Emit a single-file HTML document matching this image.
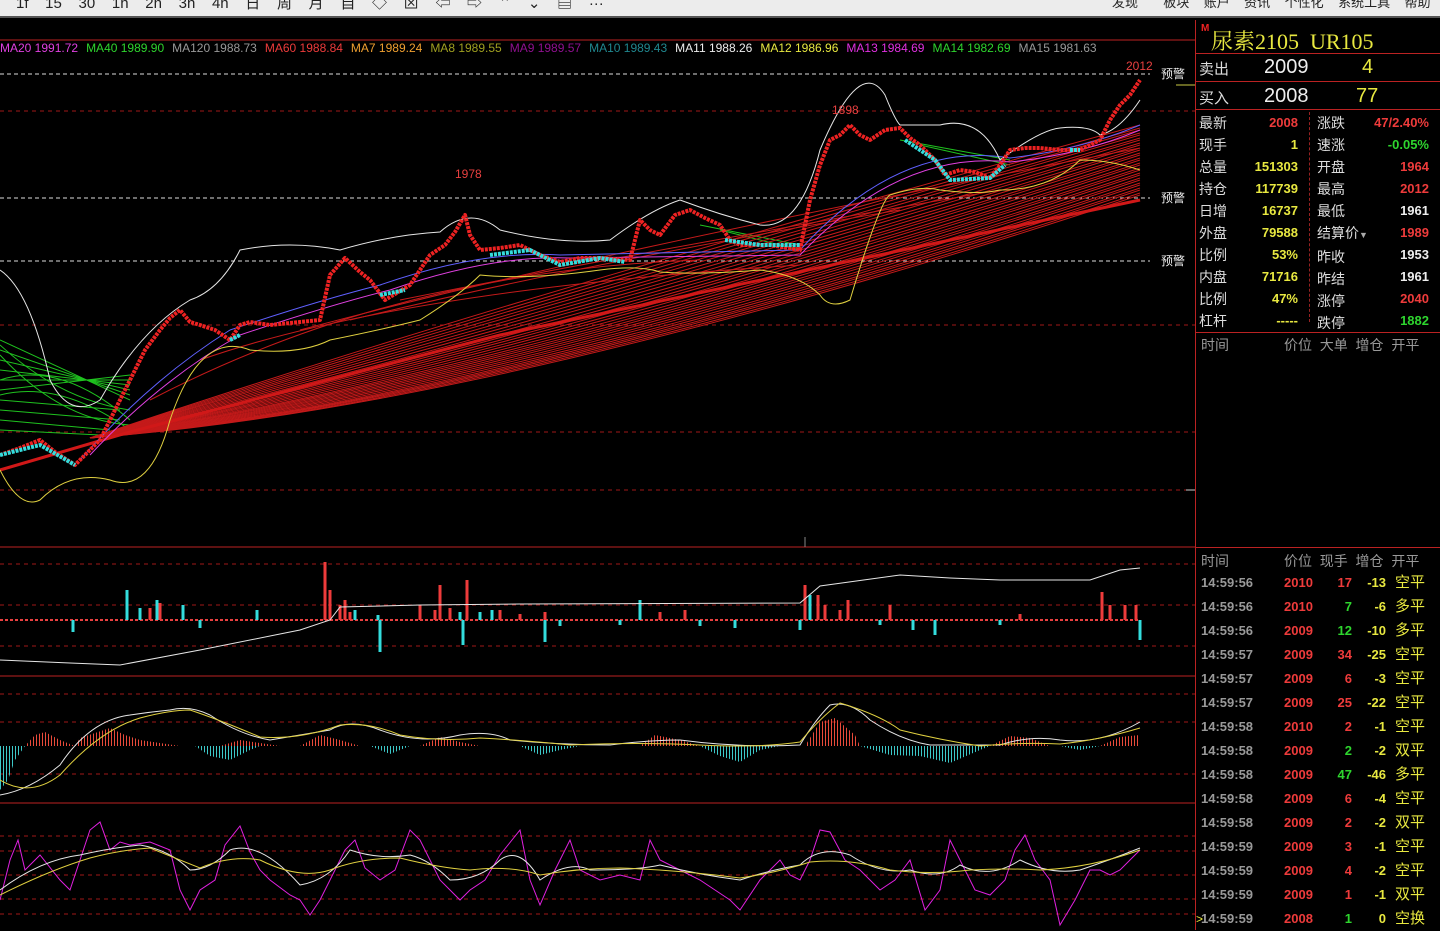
<!DOCTYPE html>
<html><head><meta charset="utf-8"><style>
*{margin:0;padding:0;box-sizing:border-box}
body{width:1440px;height:930px;background:#000;overflow:hidden;font-family:"Liberation Sans","Noto Sans CJK SC",sans-serif;position:relative}
.menu{position:absolute;left:0;top:0;width:1440px;height:18px;background:#ececec;border-bottom:2px solid #555;overflow:hidden}
.menu span{position:absolute;top:-8px;font-size:15px;color:#222}
.abs{position:absolute;white-space:nowrap}
.rp{position:absolute;left:1195px;top:20px;width:245px;height:910px;border-left:1px solid #b22;}
.lbl{color:#ddd;font-size:15px}
.y{color:#e8e840}.r{color:#ee3b3b}.g{color:#2ed52e}.w{color:#eee}.gr{color:#999}
.b{font-weight:bold;font-size:13px}
.leg span{margin-right:8px}
</style></head><body>
<div class="menu">
<span style="left:16px">1f &nbsp;&nbsp; 15 &nbsp;&nbsp; 30 &nbsp;&nbsp; 1h &nbsp;&nbsp; 2h &nbsp;&nbsp; 3h &nbsp;&nbsp; 4h &nbsp;&nbsp; 日 &nbsp;&nbsp; 周 &nbsp;&nbsp; 月 &nbsp;&nbsp; 自 &nbsp;&nbsp; ◇ &nbsp;&nbsp; ⊠ &nbsp;&nbsp; ⇦ &nbsp;&nbsp; ⇨ &nbsp;&nbsp; ⌃ &nbsp;&nbsp; ⌄ &nbsp;&nbsp; ▤ &nbsp;&nbsp; ···</span>
<span style="left:1112px;font-size:13px">发现 &nbsp;&nbsp;&nbsp;&nbsp;&nbsp; 板块 &nbsp;&nbsp; 账户 &nbsp;&nbsp; 资讯 &nbsp;&nbsp; 个性化 &nbsp;&nbsp; 系统工具 &nbsp;&nbsp; 帮助</span>
</div>

<svg class="abs" style="left:0;top:20px" width="1195" height="910" viewBox="0 20 1195 910">
<defs>
<pattern id="pr" width="3" height="10" patternUnits="userSpaceOnUse"><rect width="1" height="10" fill="#e84a3a"/></pattern>
<pattern id="pc" width="3" height="10" patternUnits="userSpaceOnUse"><rect width="1" height="10" fill="#3cc8c8"/></pattern>
</defs>
<g stroke="#a01818" stroke-width="1" fill="none">
<line x1="0" y1="40" x2="1195" y2="40" stroke="#b22"/>
<line x1="0" y1="547" x2="1195" y2="547" stroke="#b22"/>
<line x1="0" y1="676" x2="1195" y2="676" stroke="#b22"/>
<line x1="0" y1="803" x2="1195" y2="803" stroke="#b22"/>
<g stroke-dasharray="4 4">
<line x1="0" y1="111" x2="1195" y2="111"/><line x1="0" y1="325" x2="1195" y2="325"/><line x1="0" y1="432" x2="1195" y2="432"/><line x1="0" y1="490" x2="1195" y2="490"/>
<line x1="0" y1="564" x2="1195" y2="564"/><line x1="0" y1="605" x2="1195" y2="605"/><line x1="0" y1="646" x2="1195" y2="646"/>
<line x1="0" y1="694" x2="1195" y2="694"/><line x1="0" y1="722" x2="1195" y2="722"/><line x1="0" y1="774" x2="1195" y2="774"/>
<line x1="0" y1="836" x2="1195" y2="836"/><line x1="0" y1="851" x2="1195" y2="851"/><line x1="0" y1="875" x2="1195" y2="875"/><line x1="0" y1="899" x2="1195" y2="899"/><line x1="0" y1="914" x2="1195" y2="914"/>
</g>
</g>
<g stroke="#ddd" stroke-dasharray="4 3" stroke-width="1">
<line x1="0" y1="74" x2="1150" y2="74"/><line x1="0" y1="198" x2="1150" y2="198"/><line x1="0" y1="261" x2="1150" y2="261"/>
</g>
<line x1="1176" y1="85" x2="1195" y2="85" stroke="#cc4"/>
<line x1="1186" y1="490" x2="1195" y2="490" stroke="#ccc"/>
<line x1="805" y1="537" x2="805" y2="547" stroke="#888"/>
<!-- green fan left -->
<g stroke="#1fc21f" fill="none" stroke-width="1">
<path d="M0 340 L130 400"/><path d="M0 350 L130 395"/><path d="M0 360 L130 390"/><path d="M0 370 L130 385"/><path d="M0 380 L130 380"/>
<path d="M0 390 L130 375"/><path d="M0 400 L120 410"/><path d="M0 410 L120 420"/><path d="M0 420 L110 430"/><path d="M0 430 L100 435"/>
<path d="M0 380 Q60 360 130 420"/><path d="M0 395 Q60 380 130 430"/><path d="M0 345 Q60 400 130 410"/><path d="M0 355 Q60 420 130 425"/>
<path d="M700 225 L800 245"/><path d="M720 230 L800 250"/><path d="M900 140 L1010 160"/><path d="M920 145 L1010 165"/>
</g>
<!-- red fan -->
<g stroke="#c41a1a" fill="none" stroke-width="1">
<path d="M90 438 Q500 300 1140 125"/><path d="M90 438 Q500 305 1140 128"/><path d="M90 438 Q500 310 1140 130"/><path d="M90 438 Q500 315 1140 133"/><path d="M90 438 Q500 320 1140 135"/><path d="M90 438 Q500 325 1140 138"/><path d="M90 438 Q500 330 1140 140"/>
<path d="M90 438 Q500 335 1140 143"/><path d="M90 438 Q500 340 1140 145"/><path d="M90 438 Q500 345 1140 148"/><path d="M90 438 Q500 350 1140 150"/><path d="M90 438 Q500 354 1140 153"/><path d="M90 438 Q500 358 1140 155"/><path d="M90 438 Q500 362 1140 158"/><path d="M90 438 Q500 366 1140 160"/>
<path d="M90 438 Q500 370 1140 163"/><path d="M90 438 Q500 374 1140 165"/><path d="M90 438 Q500 377 1140 168"/><path d="M90 438 Q500 380 1140 170"/><path d="M90 438 Q500 383 1140 173"/><path d="M90 438 Q500 386 1140 175"/><path d="M90 438 Q500 389 1140 178"/><path d="M90 438 Q500 392 1140 180"/>
<path d="M90 438 Q500 395 1140 183"/><path d="M90 438 Q500 398 1140 185"/><path d="M90 438 Q500 400 1140 188"/><path d="M90 438 Q500 402 1140 190"/><path d="M90 438 Q500 404 1140 193"/><path d="M90 438 Q500 406 1140 195"/>
<path d="M150 400 Q400 270 700 260"/><path d="M200 360 Q400 290 800 265"/><path d="M300 330 Q600 250 1140 148"/><path d="M350 320 Q600 260 900 210"/><path d="M400 300 Q650 250 1000 190"/>
</g>
<path d="M0 470 L130 432 L500 335 L1140 200" stroke="#d01818" stroke-width="3" fill="none"/>
<!-- MA thin lines -->
<path d="M80 460 Q150 380 230 330 Q320 300 380 285 Q480 250 560 255 L800 250 Q900 140 1010 158 Q1080 150 1140 125" stroke="#6060ff" fill="none"/>
<path d="M90 455 Q160 380 240 335 Q330 305 390 290 Q490 255 570 258 L800 255 Q900 150 1010 162 Q1080 155 1140 130" stroke="#e040e0" fill="none"/>
<!-- bollinger -->
<path d="M0 270 Q30 290 50 380 Q70 420 100 400 Q140 330 190 300 Q220 290 240 250 Q290 240 340 250 Q390 235 440 232 Q470 205 500 230 Q560 245 610 240 Q650 210 680 200 Q720 215 760 225 Q800 230 820 150 Q860 55 885 95 Q895 120 900 125 L940 125 Q980 115 1000 160 Q1040 130 1060 128 Q1090 125 1100 135 Q1120 130 1140 100" stroke="#e6e6e6" fill="none"/>
<path d="M0 470 Q20 510 40 500 Q70 470 110 480 Q150 495 170 420 Q200 330 250 350 Q300 355 330 340 Q380 330 420 320 Q460 295 480 275 Q530 280 600 270 Q640 265 660 272 Q700 275 760 270 Q800 275 820 295 Q830 310 850 300 Q880 200 890 195 Q920 185 940 190 Q980 195 1000 190 Q1050 190 1080 160 Q1110 160 1140 170" stroke="#e0d040" fill="none"/>
<!-- price candles approx -->
<polyline points="0,455 20,448 40,440 55,452 75,465 90,450 100,440 115,410 130,380 145,350 160,330 170,318 180,310 190,322 200,325 215,330 230,340 240,325 250,322 270,325 300,322 320,320 330,275 345,258 360,272 370,280 385,300 410,285 420,270 430,255 445,245 455,232 465,215 470,235 480,250 500,248 520,245 540,255 560,262 580,258 600,258 630,260 640,220 650,230 660,235 675,215 690,210 705,218 720,225 730,240 740,245 770,245 800,250 810,200 820,165 830,140 840,135 850,125 860,135 870,140 885,130 900,128 910,138 920,145 935,160 945,175 960,170 975,172 990,178 1000,165 1010,150 1025,148 1040,148 1060,150 1080,150 1100,140 1110,120 1120,105 1130,95 1140,80" stroke="#ee2222" stroke-width="4" fill="none" stroke-linejoin="round" stroke-dasharray="3 1"/>
<g stroke="#33dddd" stroke-width="4" fill="none" stroke-dasharray="3 1">
<polyline points="0,455 40,445 75,465"/><polyline points="230,340 240,335"/><polyline points="380,295 405,290"/><polyline points="490,255 530,250 560,265 600,258 625,262"/><polyline points="725,240 760,245 800,245"/><polyline points="905,140 935,160 950,180 990,178 1005,165"/><polyline points="1070,150 1080,150"/>
</g>
<g fill="#e84040" font-size="12"><text x="455" y="178">1978</text><text x="832" y="114">1898</text><text x="1126" y="70">2012</text></g>
<g fill="#eee" font-size="12" font-family="Noto Sans CJK SC,sans-serif"><text x="1161" y="78">预警</text><text x="1161" y="202">预警</text><text x="1161" y="265">预警</text></g>
<!-- volume -->
<line x1="0" y1="620" x2="1140" y2="620" stroke="#e84040" stroke-width="2" stroke-dasharray="3 2"/>
<g stroke-width="3">
<path d="M127 620V590M140 620V608M157 620V600M183 620V605M257 620V610M330 620V606M378 620V615M460 620V612M492 620V610M640 620V600M810 620V595M1140 620V640M73 620V632M380 620V652M463 620V645M545 620V642M735 620V628M913 620V630M935 620V635M800 620V630M200 620V628M355 620V610M480 620V612M560 620V626M620 620V625M700 620V626M880 620V625M1000 620V625" stroke="#33dddd"/>
<path d="M325 620V562M330 620V590M345 620V600M440 620V585M467 620V580M500 620V610M545 620V612M685 620V610M805 620V585M818 620V595M848 620V600M1102 620V592M1110 620V605M1125 620V605M1136 620V605M420 620V605M890 620V605M160 620V603M150 620V608M340 620V605M350 620V612M435 620V610M450 620V608M520 620V614M660 620V612M825 620V605M840 620V610M1020 620V614" stroke="#ee3b3b"/>
</g>
<path d="M0 660 L70 663 L120 665 L200 650 L300 630 L330 620 L340 607 L420 605 L520 604 L800 603 L820 586 L900 575 L950 578 L1000 580 L1090 580 L1120 570 L1140 568" stroke="#e6e6e6" fill="none"/>
<!-- MACD -->
<path d="M25 746 L35 735 L45 732 L60 740 L75 746 L80 738 L110 728 L125 735 L140 740 L180 746 Z M300 746 L320 735 L340 740 L360 746 Z M420 746 L440 737 L460 742 L480 746 Z M640 746 L655 735 L680 740 L700 746 Z M805 746 L820 722 L835 718 L855 735 L860 746 Z M990 746 L1010 736 L1030 738 L1050 746 Z M1100 746 L1120 737 L1140 735 L1140 746 Z M220 746 L240 740 L260 743 L280 746Z" fill="url(#pr)"/>
<path d="M0 746 L0 790 L8 780 L15 760 L25 746 Z M195 746 L210 756 L230 760 L250 750 L260 746 Z M370 746 L390 754 L410 746 Z M520 746 L540 755 L560 750 L580 746 Z M700 746 L720 756 L740 762 L760 750 L780 746 Z M860 746 L890 755 L920 756 L950 763 L980 750 L990 746 Z M1060 746 L1080 750 L1100 746Z" fill="url(#pc)"/>
<path d="M0 795 Q30 790 60 765 Q90 720 130 715 Q150 712 170 710 Q190 705 210 715 Q240 735 270 740 Q300 735 330 730 Q350 718 380 730 Q420 745 460 735 Q490 730 510 740 Q560 745 610 745 Q650 740 680 740 Q740 748 800 745 Q815 720 830 705 Q850 700 870 720 Q900 740 930 745 Q970 745 1000 745 Q1030 735 1060 740 Q1100 745 1140 722" stroke="#e6e6e6" fill="none"/>
<path d="M0 780 Q30 798 60 775 Q100 730 140 718 Q170 710 190 710 Q220 720 260 737 Q300 740 340 725 Q370 722 400 735 Q440 742 480 738 Q520 740 570 745 Q640 742 700 745 Q760 748 800 742 Q820 718 840 703 Q880 715 900 730 Q940 740 980 746 Q1020 742 1060 744 Q1100 740 1140 728" stroke="#e0d040" fill="none"/>
<!-- KDJ -->
<path d="M0 900 L10 860 L18 840 L25 870 L40 855 L60 880 L70 890 L80 860 L90 830 L100 822 L110 850 L120 842 L130 845 L150 842 L170 850 L180 890 L190 910 L200 890 L215 880 L225 845 L240 826 L250 852 L260 870 L270 880 L290 895 L300 900 L310 915 L320 900 L330 880 L345 850 L355 840 L365 868 L380 880 L395 870 L410 830 L420 840 L430 860 L440 880 L450 890 L460 900 L470 890 L485 880 L500 855 L520 830 L530 880 L540 905 L555 870 L570 840 L580 870 L600 880 L620 875 L640 880 L650 840 L660 860 L680 870 L700 880 L715 890 L730 900 L740 910 L760 880 L770 870 L780 860 L790 875 L800 880 L810 860 L820 830 L830 832 L845 860 L860 870 L880 890 L895 880 L910 860 L925 910 L940 890 L950 840 L960 860 L975 890 L990 895 L1005 880 L1015 850 L1025 835 L1035 860 L1050 880 L1060 925 L1075 900 L1090 870 L1100 870 L1110 875 L1120 870 L1140 850" stroke="#e020e0" fill="none"/>
<path d="M0 890 Q40 860 80 855 Q110 848 140 845 Q170 850 190 870 Q210 870 230 850 Q260 840 300 885 Q330 880 350 850 Q380 860 410 855 Q430 860 450 880 Q480 880 500 860 Q520 845 540 880 Q570 860 590 870 Q640 870 660 865 Q700 875 740 880 Q770 870 800 865 Q820 845 850 855 Q880 875 910 870 Q940 880 960 865 Q990 880 1020 860 Q1050 875 1080 870 Q1110 860 1140 848" stroke="#e6e6e6" fill="none"/>
<path d="M0 895 Q50 870 90 858 Q120 850 150 848 Q180 860 200 868 Q230 855 260 860 Q300 880 330 870 Q360 858 400 858 Q440 868 470 870 Q510 865 540 875 Q580 868 620 868 Q680 870 740 878 Q780 872 810 862 Q850 858 890 870 Q930 875 970 870 Q1010 868 1040 870 Q1090 868 1140 850" stroke="#e0d040" fill="none"/>
</svg>

<div class="abs leg" style="left:0;top:41px;font-size:12px;">
<span style="color:#e040e0">MA20 1991.72</span><span style="color:#2ed52e">MA40 1989.90</span><span style="color:#999">MA120 1988.73</span><span style="color:#ee3b3b">MA60 1988.84</span><span style="color:#f0a030">MA7 1989.24</span><span style="color:#a0a020">MA8 1989.55</span><span style="color:#901090">MA9 1989.57</span><span style="color:#208890">MA10 1989.43</span><span style="color:#eee">MA11 1988.26</span><span style="color:#e8e840">MA12 1986.96</span><span style="color:#e030e0">MA13 1984.69</span><span style="color:#2ed52e">MA14 1982.69</span><span style="color:#999">MA15 1981.63</span>
</div>

<div class="rp">
<div class="abs" style="left:5px;top:3px;color:#e22;font-size:10px;font-weight:bold">M</div>
<div class="abs" style="left:15px;top:5px;color:#e8e840;font-size:22px;font-family:'Liberation Serif','Noto Serif CJK SC',serif">尿素2105&nbsp; UR105</div>
<div class="abs" style="left:0;top:33px;width:245px;border-top:1px solid #b22"></div>
<div class="abs" style="left:0;top:61px;width:245px;border-top:1px solid #b22"></div>
<div class="abs" style="left:0;top:89px;width:245px;border-top:1px solid #b22"></div>
<div class="abs lbl" style="left:3px;top:38px">卖出</div><div class="abs w" style="left:68px;top:36px;font-size:20px">2009</div><div class="abs y" style="left:166px;top:36px;font-size:20px">4</div>
<div class="abs lbl" style="left:3px;top:67px">买入</div><div class="abs w" style="left:68px;top:65px;font-size:20px">2008</div><div class="abs y" style="left:160px;top:65px;font-size:20px">77</div>
<div class="abs" style="left:113px;top:92px;height:210px;border-left:1px dashed #922"></div>
<div class="abs" style="left:0;top:92px;width:245px;font-size:14px;line-height:22px">
<div style="position:absolute;left:3px;top:0;color:#ddd">最新<br>现手<br>总量<br>持仓<br>日增<br>外盘<br>比例<br>内盘<br>比例<br>杠杆</div>
<div class="b" style="position:absolute;right:143px;top:0;text-align:right;line-height:22px"><span class="r">2008</span><br><span class="y">1</span><br><span class="y">151303</span><br><span class="y">117739</span><br><span class="y">16737</span><br><span class="y">79588</span><br><span class="y">53%</span><br><span class="y">71716</span><br><span class="y">47%</span><br><span class="y">-----</span></div>
<div style="position:absolute;left:121px;top:0;color:#ddd">涨跌<br>速涨<br>开盘<br>最高<br>最低<br>结算价<span style="font-size:9px;color:#aaa">▼</span><br>昨收<br>昨结<br>涨停<br>跌停</div>
<div class="b" style="position:absolute;right:12px;top:0;text-align:right;line-height:22px"><span class="r">47/2.40%</span><br><span class="g">-0.05%</span><br><span class="r">1964</span><br><span class="r">2012</span><br><span class="w">1961</span><br><span class="r">1989</span><br><span class="w">1953</span><br><span class="w">1961</span><br><span class="r">2040</span><br><span class="g">1882</span></div>
</div>
<div class="abs" style="left:0;top:312px;width:245px;border-top:1px solid #b22"></div>
<div class="abs gr" style="left:5px;top:315px;font-size:14px">时间</div>
<div class="abs gr" style="left:88px;top:315px;font-size:14px">价位&nbsp; 大单&nbsp; 增仓&nbsp; 开平</div>
<div class="abs" style="left:0;top:527px;width:245px;border-top:1px solid #b22"></div>
<div class="abs gr" style="left:5px;top:531px;font-size:14px">时间</div>
<div class="abs gr" style="left:88px;top:531px;font-size:14px">价位&nbsp; 现手&nbsp; 增仓&nbsp; 开平</div>
<div class="abs" style="left:0;top:551px;width:245px;font-size:13px;line-height:24px">
<div class="b" style="position:absolute;left:5px;top:0;color:#999;line-height:24px">14:59:56<br>14:59:56<br>14:59:56<br>14:59:57<br>14:59:57<br>14:59:57<br>14:59:58<br>14:59:58<br>14:59:58<br>14:59:58<br>14:59:58<br>14:59:59<br>14:59:59<br>14:59:59<br>14:59:59</div>
<div class="b r" style="position:absolute;left:88px;top:0;line-height:24px">2010<br>2010<br>2009<br>2009<br>2009<br>2009<br>2010<br>2009<br>2009<br>2009<br>2009<br>2009<br>2009<br>2009<br>2008</div>
<div class="b" style="position:absolute;right:89px;top:0;text-align:right;line-height:24px"><span class="r">17</span><br><span class="g">7</span><br><span class="g">12</span><br><span class="r">34</span><br><span class="r">6</span><br><span class="r">25</span><br><span class="r">2</span><br><span class="g">2</span><br><span class="g">47</span><br><span class="r">6</span><br><span class="r">2</span><br><span class="r">3</span><br><span class="r">4</span><br><span class="r">1</span><br><span class="g">1</span></div>
<div class="b y" style="position:absolute;right:55px;top:0;text-align:right;line-height:24px">-13<br>-6<br>-10<br>-25<br>-3<br>-22<br>-1<br>-2<br>-46<br>-4<br>-2<br>-1<br>-2<br>-1<br>0</div>
<div class="y" style="position:absolute;left:199px;top:0;font-size:15px;line-height:24px">空平<br>多平<br>多平<br>空平<br>空平<br>空平<br>空平<br>双平<br>多平<br>空平<br>双平<br>空平<br>空平<br>双平<br>空换</div>
<div class="y" style="position:absolute;left:0;top:336px;font-size:12px">&gt;</div>
</div>
</div>
</body></html>
